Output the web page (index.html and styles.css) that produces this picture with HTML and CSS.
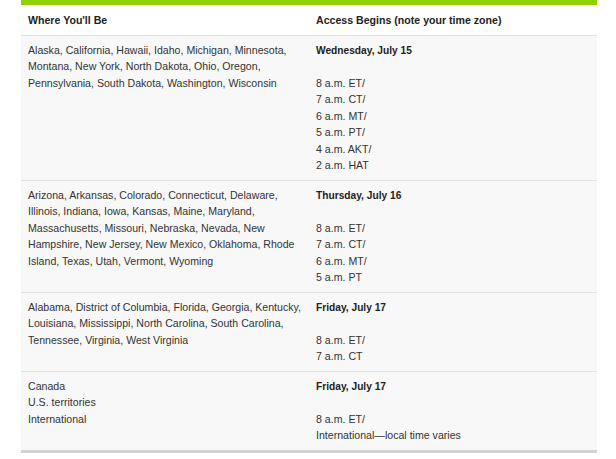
FILE: index.html
```html
<!DOCTYPE html>
<html lang="en">
<head>
<meta charset="utf-8">
<title>Access Schedule</title>
<link rel="stylesheet" href="styles.css">
</head>
<body>
<table class="schedule">
  <thead>
    <tr>
      <th>Where You'll Be</th>
      <th>Access Begins (note your time zone)</th>
    </tr>
  </thead>
  <tbody>
    <tr>
      <td>Alaska, California, Hawaii, Idaho, Michigan, Minnesota, Montana, New York, North Dakota, Ohio, Oregon, Pennsylvania, South Dakota, Washington, Wisconsin</td>
      <td><strong>Wednesday, July 15</strong><br><br>8 a.m. ET/<br>7 a.m. CT/<br>6 a.m. MT/<br>5 a.m. PT/<br>4 a.m. AKT/<br>2 a.m. HAT</td>
    </tr>
    <tr>
      <td>Arizona, Arkansas, Colorado, Connecticut, Delaware, Illinois, Indiana, Iowa, Kansas, Maine, Maryland, Massachusetts, Missouri, Nebraska, Nevada, New Hampshire, New Jersey, New Mexico, Oklahoma, Rhode Island, Texas, Utah, Vermont, Wyoming</td>
      <td><strong>Thursday, July 16</strong><br><br>8 a.m. ET/<br>7 a.m. CT/<br>6 a.m. MT/<br>5 a.m. PT</td>
    </tr>
    <tr>
      <td>Alabama, District of Columbia, Florida, Georgia, Kentucky, Louisiana, Mississippi, North Carolina, South Carolina, Tennessee, Virginia, West Virginia</td>
      <td><strong>Friday, July 17</strong><br><br>8 a.m. ET/<br>7 a.m. CT</td>
    </tr>
    <tr>
      <td>Canada<br>U.S. territories<br>International</td>
      <td><strong>Friday, July 17</strong><br><br>8 a.m. ET/<br>International—local time varies</td>
    </tr>
  </tbody>
</table>
</body>
</html>
```
FILE: styles.css
```css
html, body {
  margin: 0;
  padding: 0;
  background: #ffffff;
}
body {
  padding: 0 19px 0 21px;
  font-family: "Liberation Sans", Arial, sans-serif;
  font-size: 10.6px;
  line-height: 16.5px;
  color: #333333;
}
.schedule {
  width: 576px;
  border-collapse: collapse;
  table-layout: fixed;
  border-top: 5px solid #92d000;
  border-bottom: 3px solid #d3d3d3;
}
.schedule th,
.schedule td {
  width: 50%;
  text-align: left;
  vertical-align: top;
  padding: 6px 7px;
}
.schedule th {
  font-weight: bold;
  color: #222222;
  padding: 7px 7px 6px;
  background: #ffffff;
}
.schedule tbody tr {
  background: #f8f8f8;
  border-top: 1px solid #e2e2e2;
}
.schedule strong {
  color: #222222;
  font-size: 10.2px;
  line-height: 1;
}
```
